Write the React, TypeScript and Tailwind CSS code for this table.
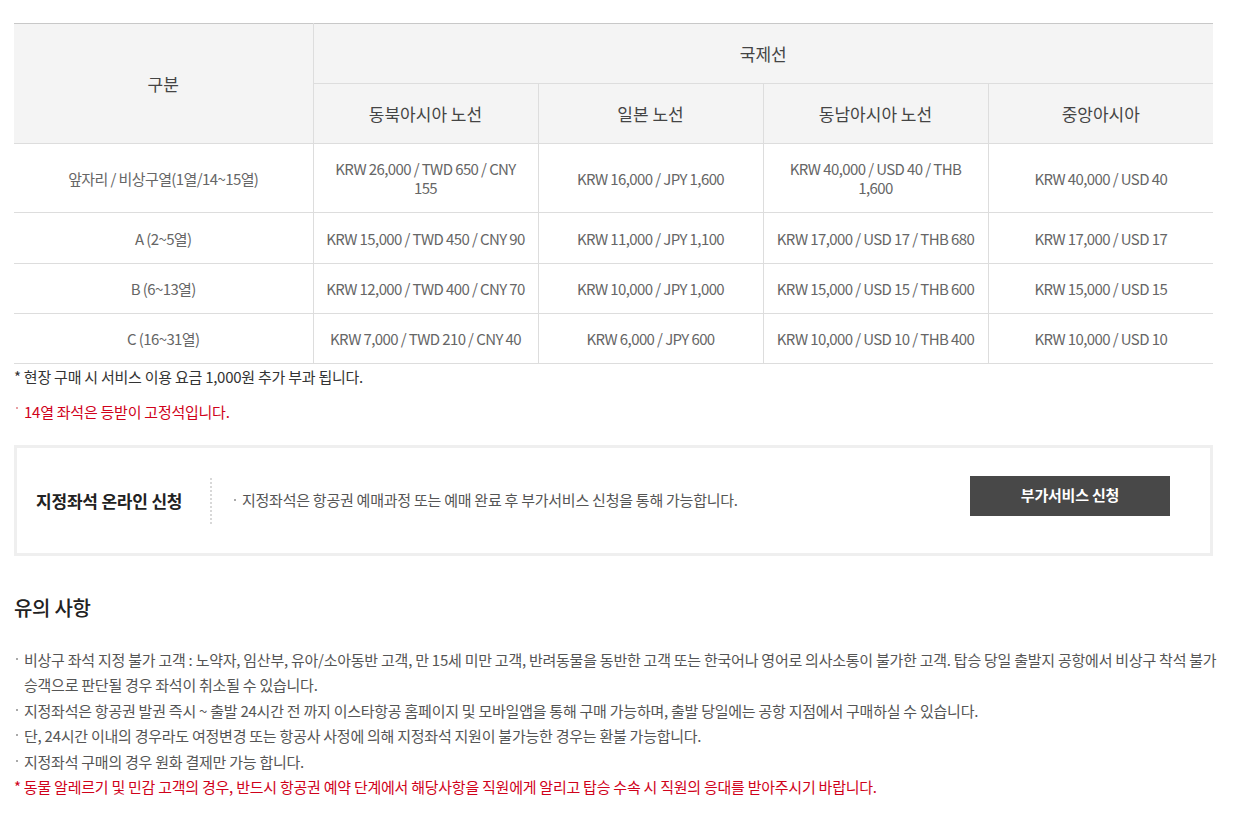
import React from "react";

type Row = { label: string; prices: string[] };

const routes = ["동북아시아 노선", "일본 노선", "동남아시아 노선", "중앙아시아"];

const rows: Row[] = [
  {
    label: "앞자리 / 비상구열(1열/14~15열)",
    prices: [
      "KRW 26,000 / TWD 650 / CNY 155",
      "KRW 16,000 / JPY 1,600",
      "KRW 40,000 / USD 40 / THB 1,600",
      "KRW 40,000 / USD 40",
    ],
  },
  {
    label: "A (2~5열)",
    prices: [
      "KRW 15,000 / TWD 450 / CNY 90",
      "KRW 11,000 / JPY 1,100",
      "KRW 17,000 / USD 17 / THB 680",
      "KRW 17,000 / USD 17",
    ],
  },
  {
    label: "B (6~13열)",
    prices: [
      "KRW 12,000 / TWD 400 / CNY 70",
      "KRW 10,000 / JPY 1,000",
      "KRW 15,000 / USD 15 / THB 600",
      "KRW 15,000 / USD 15",
    ],
  },
  {
    label: "C (16~31열)",
    prices: [
      "KRW 7,000 / TWD 210 / CNY 40",
      "KRW 6,000 / JPY 600",
      "KRW 10,000 / USD 10 / THB 400",
      "KRW 10,000 / USD 10",
    ],
  },
];

const notices = [
  "비상구 좌석 지정 불가 고객 : 노약자, 임산부, 유아/소아동반 고객, 만 15세 미만 고객, 반려동물을 동반한 고객 또는 한국어나 영어로 의사소통이 불가한 고객. 탑승 당일 출발지 공항에서 비상구 착석 불가 승객으로 판단될 경우 좌석이 취소될 수 있습니다.",
  "지정좌석은 항공권 발권 즉시 ~ 출발 24시간 전 까지 이스타항공 홈페이지 및 모바일앱을 통해 구매 가능하며, 출발 당일에는 공항 지점에서 구매하실 수 있습니다.",
  "단, 24시간 이내의 경우라도 여정변경 또는 항공사 사정에 의해 지정좌석 지원이 불가능한 경우는 환불 가능합니다.",
  "지정좌석 구매의 경우 원화 결제만 가능 합니다.",
];

export default function App() {
  return (
    <div
      className="bg-white w-[1237px] min-h-[823px] px-[14px] pt-[23px] tracking-[-0.6px]"
      style={{ fontFamily: '"Noto Sans CJK KR", "Noto Sans", sans-serif' }}
    >
      <table className="w-[1199px] border-collapse table-fixed border-t border-t-[#c8c8c8]">
        <colgroup>
          <col className="w-[299px]" />
          <col className="w-[225px]" />
          <col className="w-[225px]" />
          <col className="w-[225px]" />
          <col className="w-[225px]" />
        </colgroup>
        <thead>
          <tr className="h-[60px] bg-[#f4f4f4]">
            <th
              rowSpan={2}
              className="font-normal text-[17px] tracking-normal text-[#444] border-b border-[#ddd] border-r"
            >
              구분
            </th>
            <th
              colSpan={4}
              className="font-normal text-[17px] tracking-normal text-[#444] border-b border-[#ddd]"
            >
              국제선
            </th>
          </tr>
          <tr className="h-[60px] bg-[#f4f4f4]">
            {routes.map((r, i) => (
              <th
                key={r}
                className={`font-normal text-[17px] tracking-normal text-[#444] border-b border-[#ddd] ${
                  i < 3 ? "border-r" : ""
                }`}
              >
                {r}
              </th>
            ))}
          </tr>
        </thead>
        <tbody>
          {rows.map((row, ri) => (
            <tr key={row.label} className={ri === 0 ? "h-[69px]" : ri === 1 ? "h-[51px]" : "h-[50px]"}>
              <td className="text-center text-[15px] text-[#666] border-b border-r border-[#ddd] px-3 leading-[19px]">
                {row.label}
              </td>
              {row.prices.map((p, i) => (
                <td
                  key={i}
                  className={`text-center text-[15px] text-[#666] border-b border-[#ddd] px-[10px] leading-[19px] ${
                    i < 3 ? "border-r" : ""
                  }`}
                >
                  {p}
                </td>
              ))}
            </tr>
          ))}
        </tbody>
      </table>

      <p className="mt-[1px] text-[15px] tracking-[-0.25px] text-[#333] leading-[24px]">
        * 현장 구매 시 서비스 이용 요금 1,000원 추가 부과 됩니다.
      </p>
      <p className="relative mt-[11px] pl-[10px] text-[15px] tracking-[-0.25px] text-[#d0021b] leading-[24px]">
        <span className="absolute left-[2px] top-[7px] w-[2px] h-[2px] bg-[#e8a0a4]" />
        14열 좌석은 등받이 고정석입니다.
      </p>

      <div className="mt-[21px] w-[1199px] h-[111px] border-[3px] border-[#efefef] flex items-center">
        <h3 className="w-[193px] pl-[19px] text-[17px] tracking-[-0.2px] font-bold text-[#222]">
          지정좌석 온라인 신청
        </h3>
        <div className="h-[46px] border-l-2 border-dotted border-[#d8d8d8]" />
        <p className="relative ml-[22px] pl-[8px] flex-1 text-[15px] tracking-[-0.25px] text-[#555]">
          <span className="absolute left-0 top-[10px] w-[2px] h-[2px] bg-[#aaa]" />
          지정좌석은 항공권 예매과정 또는 예매 완료 후 부가서비스 신청을 통해 가능합니다.
        </p>
        <button className="mr-[40px] mb-[10px] w-[200px] h-[40px] bg-[#484848] text-white text-[15px] tracking-[-0.2px] font-bold">
          부가서비스 신청
        </button>
      </div>

      <h2 className="mt-[39px] text-[20px] tracking-[-0.3px] font-medium text-[#222] leading-[26px]">
        유의 사항
      </h2>

      <ul className="mt-[26px] text-[15px] tracking-[-0.25px] text-[#555] leading-[25.4px]">
        {notices.map((n) => (
          <li key={n} className="relative pl-[10px] pr-[2px]">
            <span className="absolute left-[2px] top-[11px] w-[2px] h-[2px] bg-[#aaa]" />
            {n}
          </li>
        ))}
        <li className="text-[#d0021b]">
          * 동물 알레르기 및 민감 고객의 경우, 반드시 항공권 예약 단계에서 해당사항을 직원에게 알리고 탑승 수속 시 직원의 응대를 받아주시기 바랍니다.
        </li>
      </ul>
    </div>
  );
}
